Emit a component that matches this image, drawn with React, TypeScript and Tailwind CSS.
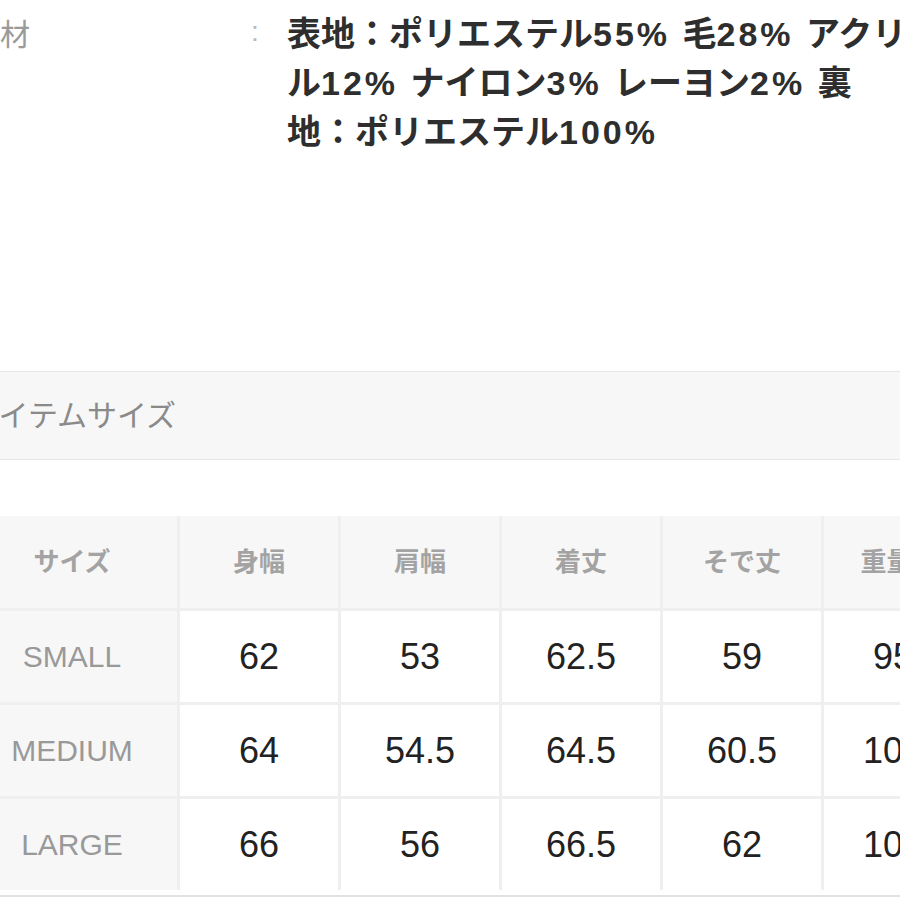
const sizes = [
  { label: "SMALL", values: ["62", "53", "62.5", "59", "950"] },
  { label: "MEDIUM", values: ["64", "54.5", "64.5", "60.5", "1000"] },
  { label: "LARGE", values: ["66", "56", "66.5", "62", "1050"] },
];

const columns = ["身幅", "肩幅", "着丈", "そで丈", "重量(g)"];

function Latin({ children }: { children: React.ReactNode }) {
  return <span className="tracking-[3px]">{children}</span>;
}

export default function App() {
  return (
    <div className="w-[900px] h-[900px] overflow-hidden bg-white font-[family-name:'Liberation_Sans','Noto_Sans_CJK_JP',sans-serif]">
      <section className="flex -ml-[30px] pt-[10px]">
        <div className="w-[281px] shrink-0 text-[30px] leading-[49px] text-[#9a9a9a]">素材</div>
        <div className="w-[36px] shrink-0 text-[28px] leading-[44px] text-[#b8b8b8]">:</div>
        <div className="text-[34px] leading-[49px] font-bold text-[#2e2e2e] whitespace-nowrap">
          <div>
            表地：ポリエステル<Latin>55% </Latin>毛<Latin>28% </Latin>アクリ
          </div>
          <div>
            ル<Latin>12% </Latin>ナイロン<Latin>3% </Latin>レーヨン<Latin>2% </Latin>裏
          </div>
          <div>
            地：ポリエステル<Latin>100%</Latin>
          </div>
        </div>
      </section>

      <div className="mt-[214px] h-[89px] flex items-center bg-[#f7f7f7] border-y border-[#e6e6e6]">
        <span className="-ml-[30px] text-[30px] text-[#8a8a8a]">アイテムサイズ</span>
      </div>

      <div className="mt-[56px] -ml-[33px] w-[1100px] bg-[#efefef]">
        <div className="grid grid-cols-[210px_158px_158px_158px_158px_158px] gap-[3px]">
          <div className="h-[92px] flex items-center justify-center bg-[#f7f7f7] text-[26px] font-bold text-[#a3a3a3]">
            サイズ
          </div>
          {columns.map((c) => (
            <div
              key={c}
              className="h-[92px] flex items-center justify-center bg-[#f7f7f7] text-[26px] font-bold text-[#a3a3a3]"
            >
              {c}
            </div>
          ))}
          {sizes.map((row) => (
            <>
              <div
                key={row.label}
                className="h-[91px] flex items-center justify-center bg-[#f7f7f7] text-[30px] text-[#999999]"
              >
                {row.label}
              </div>
              {row.values.map((v, i) => (
                <div
                  key={row.label + i}
                  className="h-[91px] flex items-center justify-center bg-white text-[36px] text-[#222222]"
                >
                  {v}
                </div>
              ))}
            </>
          ))}
        </div>
      </div>
      <div className="h-[7px] bg-white border-b-2 border-[#e2e2e2]" />
    </div>
  );
}
